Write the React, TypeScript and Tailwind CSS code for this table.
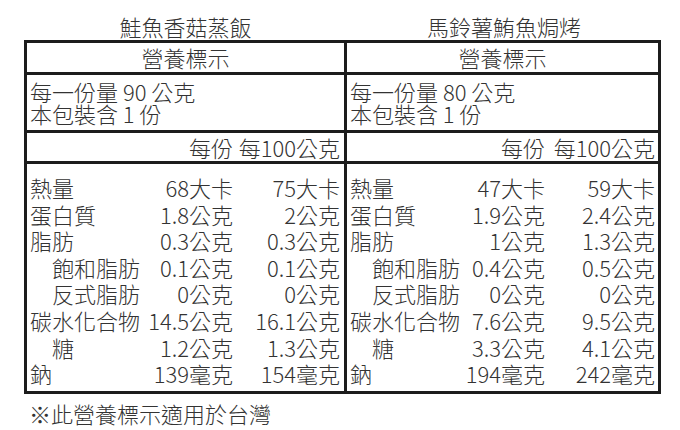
type Row = { label: string; a: string; b: string; indent?: boolean };

const salmon: Row[] = [
  { label: "熱量", a: "68大卡", b: "75大卡" },
  { label: "蛋白質", a: "1.8公克", b: "2公克" },
  { label: "脂肪", a: "0.3公克", b: "0.3公克" },
  { label: "飽和脂肪", a: "0.1公克", b: "0.1公克", indent: true },
  { label: "反式脂肪", a: "0公克", b: "0公克", indent: true },
  { label: "碳水化合物", a: "14.5公克", b: "16.1公克" },
  { label: "糖", a: "1.2公克", b: "1.3公克", indent: true },
  { label: "鈉", a: "139毫克", b: "154毫克" },
];

const tuna: Row[] = [
  { label: "熱量", a: "47大卡", b: "59大卡" },
  { label: "蛋白質", a: "1.9公克", b: "2.4公克" },
  { label: "脂肪", a: "1公克", b: "1.3公克" },
  { label: "飽和脂肪", a: "0.4公克", b: "0.5公克", indent: true },
  { label: "反式脂肪", a: "0公克", b: "0公克", indent: true },
  { label: "碳水化合物", a: "7.6公克", b: "9.5公克" },
  { label: "糖", a: "3.3公克", b: "4.1公克", indent: true },
  { label: "鈉", a: "194毫克", b: "242毫克" },
];

function Label({
  title,
  grams,
  rows,
  boxClass,
  gridClass,
  padClass,
}: {
  title: string;
  grams: string;
  rows: Row[];
  boxClass: string;
  gridClass: string;
  padClass: string;
}) {
  return (
    <div className="flex flex-col">
      <div className="h-[40px] pt-[13px] text-center leading-[26px]">{title}</div>
      <div className={`flex flex-col border-[#1c1c1c] ${boxClass}`}>
        <div className="h-[29px] text-center leading-[29px]">營養標示</div>
        <div className={`border-t-[3px] border-[#1c1c1c] pt-[5px] pb-[6px] leading-[22px] ${padClass}`}>
          <div>每一份量 {grams} 公克</div>
          <div>本包裝含 1 份</div>
        </div>
        <div className={`grid h-[34px] border-y-[3px] border-[#1c1c1c] leading-[28px] ${gridClass} ${padClass}`}>
          <span />
          <span className="text-right">每份</span>
          <span className="text-right">每100公克</span>
        </div>
        <div className={`grid pt-[10px] pb-[4px] leading-[26.6px] ${gridClass} ${padClass}`}>
          {rows.map((r) => (
            <div key={r.label} className="contents">
              <span className={`whitespace-nowrap ${r.indent ? "pl-[22px]" : ""}`}>{r.label}</span>
              <span className="whitespace-nowrap text-right">{r.a}</span>
              <span className="whitespace-nowrap text-right">{r.b}</span>
            </div>
          ))}
        </div>
      </div>
    </div>
  );
}

export default function App() {
  return (
    <div
      className="h-[430px] w-[680px] bg-white pl-[24px] text-[22px] font-light text-[#333333]"
      style={{ fontFamily: '"Noto Sans CJK TC", "Noto Sans", sans-serif' }}
    >
      <div className="flex">
        <div className="w-[323px]">
          <Label
            title="鮭魚香菇蒸飯"
            grams="90"
            rows={salmon}
            boxClass="border-[3px]"
            gridClass="grid-cols-[1fr_90px_107px]"
            padClass="pl-[3px] pr-[4px]"
          />
        </div>
        <div className="w-[314px]">
          <Label
            title="馬鈴薯鮪魚焗烤"
            grams="80"
            rows={tuna}
            boxClass="border-y-[3px] border-r-[3px]"
            gridClass="grid-cols-[1fr_85px_110px]"
            padClass="pl-[3px] pr-[3px]"
          />
        </div>
      </div>
      <div className="mt-[6px] pl-[5px] leading-[26px]">※此營養標示適用於台灣</div>
    </div>
  );
}
